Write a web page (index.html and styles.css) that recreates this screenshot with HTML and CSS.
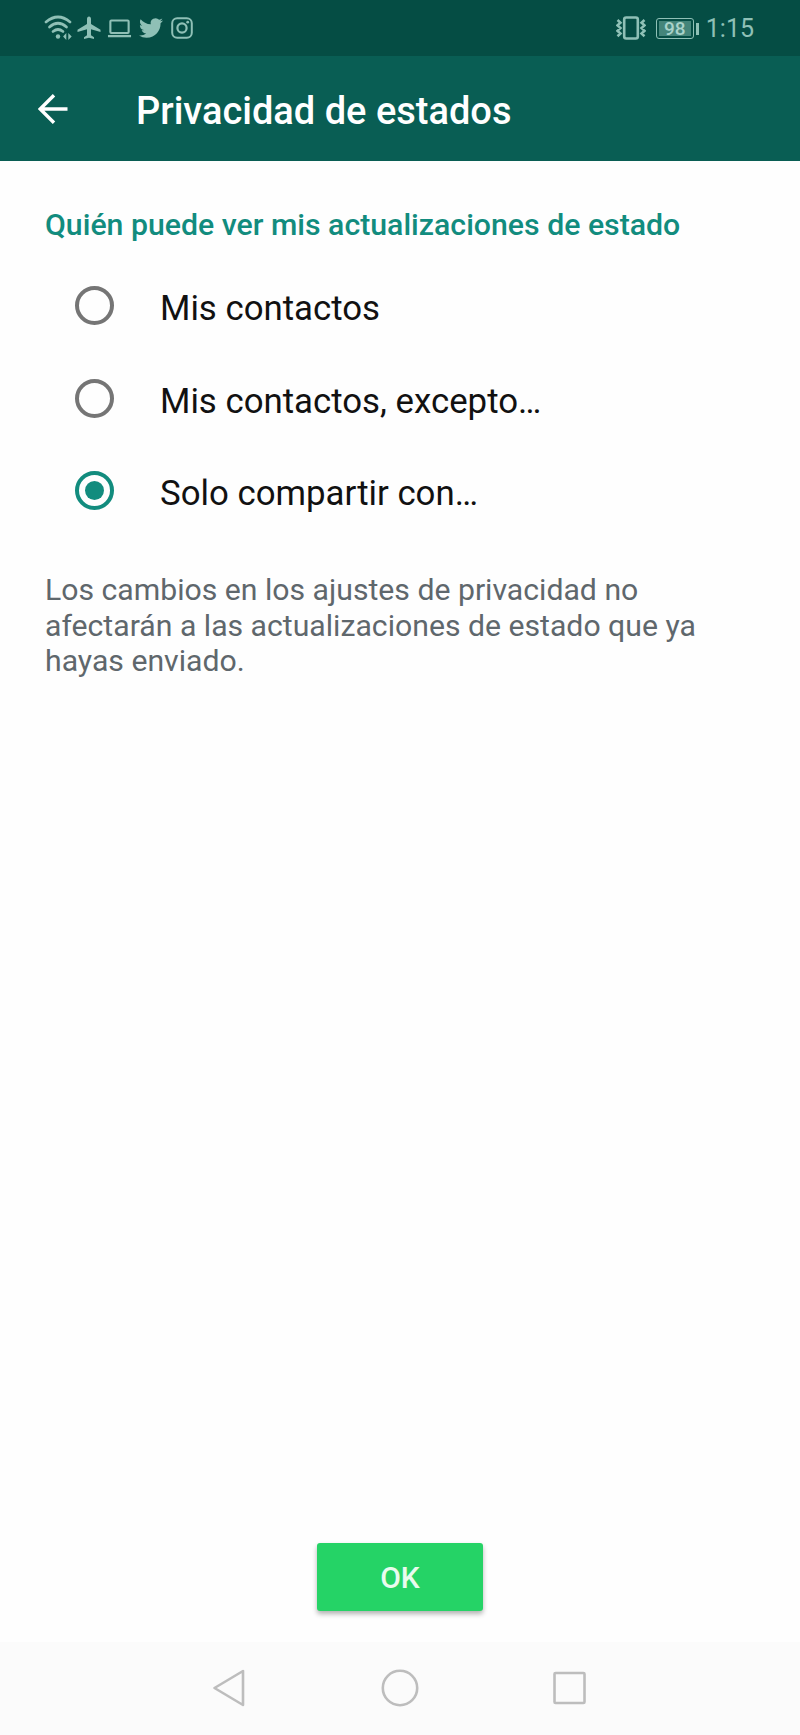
FILE: index.html
```
<!DOCTYPE html>
<html lang="es">
<head>
    <meta charset="UTF-8">
    <meta name="viewport" content="width=device-width, initial-scale=1.0">
    <title>Privacidad de estados</title>
    <link rel="stylesheet" href="styles.css">
</head>
<body>
    <div class="status-bar">
        <div class="status-left">
            <svg class="wifi" width="28" height="26" viewBox="0 0 28 26">
                <g fill="none" stroke="currentColor" stroke-width="2.7" stroke-linecap="round">
                    <path d="M2 7 Q14 -3 26 7"/>
                    <path d="M5.5 12 Q14 4.5 22.5 12"/>
                    <path d="M9 16.5 Q14 12.5 19 16.5"/>
                </g>
                <circle cx="14" cy="21.5" r="2.2" fill="currentColor"/>
                <path fill="currentColor" d="M22.3 18v7l-3.2-3.5zM24.3 18v7l3.4-3.5z"/>
            </svg>
            <svg class="plane" width="24" height="24" viewBox="0 0 24 24">
                <path fill="currentColor" d="M23.5 16v-2.3L14 8V3c0-1.3-.8-2.5-2-2.5S10 1.7 10 3v5L.5 13.7V16L10 13.2v6L7 21.3V23l5-1.3L17 23v-1.7l-3-2.1v-6z"/>
            </svg>
            <svg class="laptop" width="25" height="20" viewBox="0 0 26 20">
                <rect x="3.5" y="1.2" width="19" height="13" rx="1" fill="none" stroke="currentColor" stroke-width="2.2"/>
                <path d="M1 17.4h24" stroke="currentColor" stroke-width="2.4"/>
            </svg>
            <svg class="twitter" width="24" height="24" viewBox="0 0 24 24">
                <path fill="currentColor" d="M23.953 4.57a10 10 0 0 1-2.825.775 4.958 4.958 0 0 0 2.163-2.723 9.9 9.9 0 0 1-3.127 1.184 4.92 4.92 0 0 0-8.384 4.482C7.69 8.095 4.067 6.13 1.64 3.162a4.822 4.822 0 0 0-.666 2.475c0 1.71.87 3.213 2.188 4.096a4.904 4.904 0 0 1-2.228-.616v.06a4.923 4.923 0 0 0 3.946 4.827 4.996 4.996 0 0 1-2.212.085 4.936 4.936 0 0 0 4.604 3.417 9.867 9.867 0 0 1-6.102 2.105c-.39 0-.779-.023-1.17-.067a13.995 13.995 0 0 0 7.557 2.209c9.053 0 13.998-7.496 13.998-13.985 0-.21 0-.42-.015-.63A9.935 9.935 0 0 0 24 4.59z"/>
            </svg>
            <svg class="instagram" width="22" height="22" viewBox="0 0 22 22">
                <rect x="1.2" y="1.2" width="19.6" height="19.6" rx="5" fill="none" stroke="currentColor" stroke-width="2"/>
                <circle cx="11" cy="11" r="4.6" fill="none" stroke="currentColor" stroke-width="2.2"/>
                <circle cx="16.7" cy="5.2" r="1.4" fill="currentColor"/>
            </svg>
        </div>
        <div class="status-right">
            <svg class="vibrate" width="30" height="24" viewBox="0 0 30 24">
                <rect x="8.2" y="1.5" width="13.6" height="21" rx="2" fill="none" stroke="currentColor" stroke-width="2.6"/>
                <path d="M1.5 4l3 2.7-3 2.7 3 2.7-3 2.7 3 2.7-3 2.7M28.5 4l-3 2.7 3 2.7-3 2.7 3 2.7-3 2.7 3 2.7" fill="none" stroke="currentColor" stroke-width="2.5"/>
            </svg>
            <div class="battery"><span class="battery-level">98</span></div>
            <span class="clock">1:15</span>
        </div>
    </div>

    <header class="app-bar">
        <svg class="back" width="30" height="30" viewBox="0 0 30 30">
            <path d="M29.5 15H2M16 1.2L2.2 15L16 28.8" fill="none" stroke="currentColor" stroke-width="3.4"/>
        </svg>
        <h1>Privacidad de estados</h1>
    </header>

    <main class="content">
        <h2>Quién puede ver mis actualizaciones de estado</h2>

        <div class="options">
            <label class="option">
                <input type="radio" name="privacy">
                <span>Mis contactos</span>
            </label>
            <label class="option">
                <input type="radio" name="privacy">
                <span>Mis contactos, excepto…</span>
            </label>
            <label class="option">
                <input type="radio" name="privacy" checked>
                <span>Solo compartir con…</span>
            </label>
        </div>

        <p class="note">Los cambios en los ajustes de privacidad no afectarán a las actualizaciones de estado que ya hayas enviado.</p>

        <button class="ok-btn">OK</button>
    </main>

    <nav class="nav-bar">
        <svg width="40" height="40" viewBox="0 0 40 40">
            <path d="M33 3v34L4.5 20z"/>
        </svg>
        <svg width="40" height="40" viewBox="0 0 40 40">
            <circle cx="20" cy="20" r="17.2"/>
        </svg>
        <svg width="40" height="40" viewBox="0 0 40 40">
            <rect x="4.5" y="5" width="30" height="30" rx="1"/>
        </svg>
    </nav>
</body>
</html>
```
FILE: styles.css
```
:root {
    --status: #054d44;
    --primary: #095e54;
    --accent: #128c7e;
    --green: #25d366;
    --status-icon: #8fc0b6;
}

* {
    box-sizing: border-box;
}

body {
    margin: 0;
    height: 1735px;
    display: flex;
    flex-direction: column;
    font-family: Roboto, sans-serif;
    background: #fefefe;
    color: #111;
}

/* Barra de estado */
.status-bar {
    display: flex;
    justify-content: space-between;
    height: 56px;
    padding: 0 46px 0 44px;
    background: var(--status);
    color: var(--status-icon);
}

.status-left,
.status-right {
    display: flex;
    align-items: center;
}

.plane {
    margin-left: 5px;
}

.laptop {
    margin: 2px 0 0 6px;
}

.twitter {
    margin-left: 7px;
}

.instagram {
    margin-left: 8px;
}

.battery {
    position: relative;
    width: 38px;
    height: 21px;
    margin: 0 12px 0 10px;
    padding: 2px;
    border: 1px solid var(--status-icon);
    border-radius: 3px;
}

.battery::after {
    content: "";
    position: absolute;
    top: 4px;
    right: -6px;
    width: 3px;
    height: 12px;
    background: var(--status-icon);
}

.battery-level {
    display: block;
    height: 100%;
    background: #44857a;
    color: #a9d3ca;
    font-size: 19px;
    font-weight: 500;
    line-height: 16px;
    text-align: center;
}

.clock {
    font-size: 25px;
}

/* Cabecera */
.app-bar {
    display: flex;
    align-items: center;
    height: 105px;
    padding-left: 38px;
    background: var(--primary);
    color: #fff;
}

.app-bar h1 {
    margin: 4px 0 0 68px;
    font-size: 38px;
    font-weight: 500;
}

/* Opciones */
.content {
    flex: 1;
    display: flex;
    flex-direction: column;
    padding: 46px 45px 31px;
}

.content h2 {
    margin: 0;
    color: var(--accent);
    font-size: 30.25px;
    font-weight: 500;
    line-height: 36px;
}

.options {
    margin: 16px 0 0 30px;
}

.option {
    display: flex;
    align-items: center;
    height: 92.7px;
    font-size: 34.8px;
}

.option span {
    margin: 5px 0 0 46px;
}

.option input {
    appearance: none;
    display: grid;
    place-items: center;
    width: 39px;
    height: 39px;
    margin: 0;
    border: 4px solid #757575;
    border-radius: 50%;
}

.option input:checked {
    border-color: var(--accent);
}

.option input:checked::before {
    content: "";
    width: 19px;
    height: 19px;
    border-radius: 50%;
    background: var(--accent);
}

.note {
    max-width: 680px;
    margin: 35px 0 0;
    color: #5f676c;
    font-size: 30.2px;
    line-height: 35.7px;
}

.ok-btn {
    width: 166px;
    height: 68px;
    margin: auto auto 0;
    border: none;
    border-radius: 3px;
    background: var(--green);
    color: #e9fbee;
    font: 500 30px Roboto, sans-serif;
    box-shadow: 0 3px 5px rgba(0, 0, 0, 0.3);
}

/* Botones del sistema */
.nav-bar {
    display: flex;
    justify-content: center;
    align-items: center;
    gap: 130px;
    height: 93px;
    padding-bottom: 1px;
    background: #fbfbfb;
}

.nav-bar svg {
    fill: none;
    stroke: #bdbdbd;
    stroke-width: 2.6;
    stroke-linejoin: round;
}
```
